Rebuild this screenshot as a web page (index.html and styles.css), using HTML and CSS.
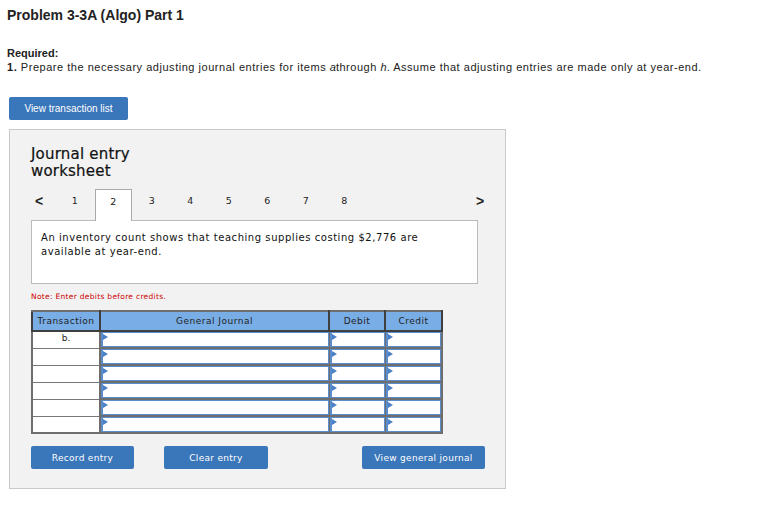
FILE: index.html
```html
<!DOCTYPE html>
<html>
<head>
<meta charset="utf-8">
<link rel="stylesheet" href="styles.css">
</head>
<body>
<h1 class="title">Problem 3-3A (Algo) Part 1</h1>
<div class="req">
  <div class="req-label">Required:</div>
  <div class="req-text"><b>1.</b> Prepare the necessary adjusting journal entries for items <i>a</i>through <i>h</i>. Assume that adjusting entries are made only at year-end.</div>
</div>
<button class="btn btn-list">View transaction list</button>
<div class="panel">
  <div class="panel-title">Journal entry<br>worksheet</div>
  <div class="tabs">
    <span class="arrow">&lt;</span>
    <span class="tab">1</span>
    <span class="tab active">2</span>
    <span class="tab">3</span>
    <span class="tab">4</span>
    <span class="tab">5</span>
    <span class="tab">6</span>
    <span class="tab">7</span>
    <span class="tab">8</span>
    <span class="spacer"></span>
    <span class="arrow right">&gt;</span>
  </div>
  <div class="desc">An inventory count shows that teaching supplies costing $2,776 are available at year-end.</div>
  <div class="note">Note: Enter debits before credits.</div>
  <table class="journal">
    <thead>
      <tr><th class="c-tr">Transaction</th><th class="c-gj">General Journal</th><th class="c-dr">Debit</th><th class="c-cr">Credit</th></tr>
    </thead>
    <tbody>
      <tr><td class="tr">b.</td><td class="in"><div class="box"></div></td><td class="in"><div class="box"></div></td><td class="in"><div class="box"></div></td></tr>
      <tr><td class="tr"></td><td class="in"><div class="box"></div></td><td class="in"><div class="box"></div></td><td class="in"><div class="box"></div></td></tr>
      <tr><td class="tr"></td><td class="in"><div class="box"></div></td><td class="in"><div class="box"></div></td><td class="in"><div class="box"></div></td></tr>
      <tr><td class="tr"></td><td class="in"><div class="box"></div></td><td class="in"><div class="box"></div></td><td class="in"><div class="box"></div></td></tr>
      <tr><td class="tr"></td><td class="in"><div class="box"></div></td><td class="in"><div class="box"></div></td><td class="in"><div class="box"></div></td></tr>
      <tr><td class="tr"></td><td class="in"><div class="box"></div></td><td class="in"><div class="box"></div></td><td class="in"><div class="box"></div></td></tr>
    </tbody>
  </table>
  <div class="actions">
    <button class="btn btn-record">Record entry</button>
    <button class="btn btn-clear">Clear entry</button>
    <span class="spacer"></span>
    <button class="btn btn-view">View general journal</button>
  </div>
</div>
</body>
</html>
```
FILE: styles.css
```css
* { box-sizing: border-box; }
body {
  margin: 0;
  padding: 7px 0 0 7px;
  background: #fff;
  font-family: "Liberation Sans", Arial, sans-serif;
  color: #222;
}
.title {
  margin: 0;
  font-size: 14px;
  font-weight: bold;
  line-height: 16px;
  color: #222;
}
.req { margin-top: 23px; }
.req-label {
  font-size: 11px;
  font-weight: bold;
  line-height: 14px;
}
.req-text {
  font-size: 11px;
  line-height: 15px;
  letter-spacing: 0.53px;
}
.req-text i { letter-spacing: 0; }
.btn {
  display: inline-block;
  border: none;
  border-radius: 2px;
  background: #3a76ba;
  color: #fff;
  font-family: "DejaVu Sans", Verdana, sans-serif;
  font-size: 9px;
  letter-spacing: 0.3px;
  height: 23px;
  padding: 0;
  cursor: pointer;
}
.btn-list {
  margin: 22px 0 0 2px;
  width: 119px;
  font-family: "Liberation Sans", Arial, sans-serif;
  font-size: 10px;
  letter-spacing: 0;
}
.panel {
  margin: 9px 0 0 2px;
  width: 497px;
  height: 360px;
  background: #f2f2f2;
  border: 1px solid #c9c9c9;
  padding: 16px 0 0 21px;
  font-family: "DejaVu Sans", Verdana, sans-serif;
}
.panel-title {
  font-size: 15px;
  line-height: 17px;
  color: #111;
  letter-spacing: 0.2px;
  -webkit-text-stroke: 0.2px #111;
}
.tabs {
  display: flex;
  align-items: stretch;
  margin-top: 9px;
  width: 455px;
  height: 31px;
  font-size: 9.5px;
  color: #222;
}
.arrow {
  width: 25px;
  padding-left: 4px;
  font-size: 14px;
  font-weight: bold;
  line-height: 24px;
  font-family: "Liberation Sans", Arial, sans-serif;
}
.arrow.right { width: 14px; }
.tab {
  width: 37.5px;
  margin-right: 1px;
  text-align: center;
  line-height: 24px;
}
.tab.active {
  background: #fff;
  border: 1px solid #aaa;
  border-bottom: none;
  position: relative;
  z-index: 1;
  margin-bottom: -1px;
}
.spacer { flex: 1; }
.desc {
  width: 447px;
  height: 64px;
  background: #fff;
  border: 1px solid #bbb;
  padding: 10px 9px;
  font-size: 10px;
  line-height: 14px;
  letter-spacing: 0.55px;
  color: #111;
}
.note {
  margin-top: 8px;
  font-size: 7.5px;
  color: #c00;
  letter-spacing: 0.3px;
  line-height: 10px;
}
.journal {
  margin-top: 8px;
  border-collapse: collapse;
  border: 2px solid #6e6e6e;
  font-size: 9px;
  table-layout: fixed;
  width: 410px;
}
.journal th {
  background: #79ade6;
  font-weight: normal;
  height: 20px;
  border: 2px solid #3f3f3f;
  border-top: 2px solid #6e6e6e;
  padding: 0;
  color: #222;
  letter-spacing: 0.5px;
}
.c-tr { width: 68px; }
.c-gj { width: 229px; }
.c-dr { width: 56px; }
.c-cr { width: 57px; }
.journal td {
  height: 17px;
  padding: 0;
  background: #fff;
}
.journal td.tr {
  border: 1px solid #777;
  border-right: 2px solid #6e6e6e;
  text-align: center;
  font-size: 9px;
  vertical-align: top;
  padding-top: 1px;
}
.journal td.in {
  border: 1px solid #6e6e6e;
  border-bottom-width: 2px;
  position: relative;
  background: #fff;
}
.box {
  height: 15px;
  border: 1px solid #5b8ccc;
  border-left-width: 2px;
  position: relative;
}
.box::before {
  content: "";
  position: absolute;
  left: 0;
  top: 1px;
  border-left: 5px solid #4a80c8;
  border-top: 3px solid transparent;
  border-bottom: 3px solid transparent;
}
.actions {
  display: flex;
  width: 454px;
  margin-top: 12px;
}
.btn-record { width: 103px; }
.btn-clear { width: 104px; margin-left: 30px; }
.btn-view { width: 123px; }
```
